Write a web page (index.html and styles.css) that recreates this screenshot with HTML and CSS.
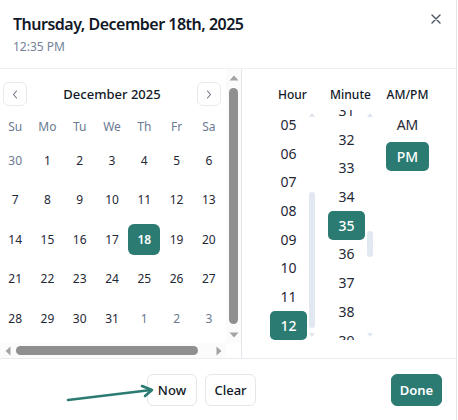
FILE: index.html
```html
<!DOCTYPE html>
<html lang="en">
<head>
<meta charset="utf-8">
<title>Date time picker</title>
<link rel="stylesheet" href="styles.css">
</head>
<body>
<div class="dialog">
  <header class="head">
    <div class="head-text">
      <div class="title">Thursday, December 18th, 2025</div>
      <div class="subtitle">12:35 PM</div>
    </div>
    <button class="close" aria-label="Close">
      <svg width="10" height="10" viewBox="0 0 10 10"><path d="M1 1L9 9M9 1L1 9" stroke="#4b5563" stroke-width="1.4" stroke-linecap="round"/></svg>
    </button>
  </header>

  <div class="body">
    <div class="cal-pane">
      <div class="cal-view">
        <div class="cal">
          <div class="cal-nav">
            <button class="nav-btn" aria-label="Previous month">
              <svg width="6" height="9" viewBox="0 0 6 9"><path d="M4.5 1L1.5 4.5L4.5 8" fill="none" stroke="#6b7280" stroke-width="1.1" stroke-linecap="round" stroke-linejoin="round"/></svg>
            </button>
            <div class="month">December 2025</div>
            <button class="nav-btn" aria-label="Next month">
              <svg width="6" height="9" viewBox="0 0 6 9"><path d="M1.5 1L4.5 4.5L1.5 8" fill="none" stroke="#6b7280" stroke-width="1.1" stroke-linecap="round" stroke-linejoin="round"/></svg>
            </button>
          </div>
          <div class="weekdays">
            <span>Su</span><span>Mo</span><span>Tu</span><span>We</span><span>Th</span><span>Fr</span><span>Sa</span>
          </div>
          <div class="days">
            <span class="day out">30</span><span class="day">1</span><span class="day">2</span><span class="day">3</span><span class="day">4</span><span class="day">5</span><span class="day">6</span>
            <span class="day">7</span><span class="day">8</span><span class="day">9</span><span class="day">10</span><span class="day">11</span><span class="day">12</span><span class="day">13</span>
            <span class="day">14</span><span class="day">15</span><span class="day">16</span><span class="day">17</span><span class="day sel">18</span><span class="day">19</span><span class="day">20</span>
            <span class="day">21</span><span class="day">22</span><span class="day">23</span><span class="day">24</span><span class="day">25</span><span class="day">26</span><span class="day">27</span>
            <span class="day">28</span><span class="day">29</span><span class="day">30</span><span class="day">31</span><span class="day out">1</span><span class="day out">2</span><span class="day out">3</span>
          </div>
        </div>
      </div>
      <div class="vscroll">
        <div class="sb-btn-v"><svg width="10" height="6" viewBox="0 0 10 6"><path d="M5 0.5L9.5 5.5H0.5Z" fill="#a3a3a3"/></svg></div>
        <div class="vtrack"><div class="vthumb"></div></div>
        <div class="sb-btn-v"><svg width="10" height="6" viewBox="0 0 10 6"><path d="M0.5 0.5H9.5L5 5.5Z" fill="#a3a3a3"/></svg></div>
      </div>
      <div class="hscroll">
        <div class="sb-btn-h"><svg width="6" height="10" viewBox="0 0 6 10"><path d="M0.5 5L5.5 0.5V9.5Z" fill="#a3a3a3"/></svg></div>
        <div class="htrack"><div class="hthumb"></div></div>
        <div class="sb-btn-h"><svg width="6" height="10" viewBox="0 0 6 10"><path d="M5.5 5L0.5 0.5V9.5Z" fill="#a3a3a3"/></svg></div>
      </div>
      <div class="corner"></div>
    </div>

    <div class="time-pane">
      <div class="tcol">
        <div class="thead">Hour</div>
        <div class="tbody">
          <div class="tlist">
            <div class="titem">05</div><div class="titem">06</div><div class="titem">07</div><div class="titem">08</div>
            <div class="titem">09</div><div class="titem">10</div><div class="titem">11</div><div class="titem sel">12</div>
          </div>
          <div class="tscroll">
            <div class="ts-btn"><svg width="6" height="4" viewBox="0 0 6 4"><path d="M3 0L6 4H0Z" fill="#dfe5ee"/></svg></div>
            <div class="ts-track"><div class="ts-thumb hour-thumb"></div></div>
            <div class="ts-btn"><svg width="6" height="4" viewBox="0 0 6 4"><path d="M0 0H6L3 4Z" fill="#dfe5ee"/></svg></div>
          </div>
        </div>
      </div>
      <div class="tcol">
        <div class="thead">Minute</div>
        <div class="tbody">
          <div class="tlist">
            <div class="tinner minute-inner">
              <div class="titem">31</div><div class="titem">32</div><div class="titem">33</div><div class="titem">34</div>
              <div class="titem sel">35</div><div class="titem">36</div><div class="titem">37</div><div class="titem">38</div><div class="titem">39</div>
            </div>
          </div>
          <div class="tscroll">
            <div class="ts-btn"><svg width="6" height="4" viewBox="0 0 6 4"><path d="M3 0L6 4H0Z" fill="#dfe5ee"/></svg></div>
            <div class="ts-track"><div class="ts-thumb minute-thumb"></div></div>
            <div class="ts-btn"><svg width="6" height="4" viewBox="0 0 6 4"><path d="M0 0H6L3 4Z" fill="#dfe5ee"/></svg></div>
          </div>
        </div>
      </div>
      <div class="tcol ampm-col">
        <div class="thead">AM/PM</div>
        <div class="ampm-list">
          <div class="ap-item">AM</div>
          <div class="ap-item sel">PM</div>
        </div>
      </div>
    </div>
  </div>

  <footer class="foot">
    <svg class="pointer" width="160" height="45" viewBox="0 0 160 45">
      <path d="M68 41L151 31" stroke="#2b7b73" stroke-width="2.6" stroke-linecap="round" fill="none"/>
      <path d="M142 27L152 31L145 37" stroke="#2b7b73" stroke-width="2.6" stroke-linecap="round" stroke-linejoin="round" fill="none"/>
    </svg>
    <button class="btn btn-now">Now</button>
    <button class="btn btn-clear">Clear</button>
    <button class="btn primary">Done</button>
  </footer>
</div>
</body>
</html>
```

FILE: styles.css
```css
* { box-sizing: border-box; }

body {
  margin: 0;
  background: #ffffff;
  font-family: "Noto Sans", "Open Sans", sans-serif;
  color: #111827;
}

button { font-family: inherit; cursor: pointer; }

.dialog {
  width: 457px;
  height: 420px;
  border-right: 1px solid #e5e7eb;
  display: flex;
  flex-direction: column;
  overflow: hidden;
}

/* header */
.head {
  flex: none;
  height: 69px;
  border-bottom: 1px solid #eceff3;
  display: flex;
  justify-content: space-between;
  align-items: flex-start;
  padding: 13px 0 0 13px;
}

.title {
  font-size: 16px;
  font-weight: 600;
  line-height: 23px;
  letter-spacing: -0.5px;
  color: #111827;
}

.subtitle {
  margin-top: 3px;
  font-size: 12px;
  line-height: 16px;
  color: #74829a;
}

.close {
  width: 24px;
  height: 24px;
  margin: -6px 8px 0 0;
  padding: 0;
  border: 0;
  background: none;
  display: flex;
  align-items: center;
  justify-content: center;
}

/* body */
.body {
  flex: none;
  height: 289px;
  display: flex;
}

.cal-pane {
  width: 242px;
  border-right: 1px solid #e5e7eb;
  display: grid;
  grid-template-columns: 226px 15px;
  grid-template-rows: 274px 15px;
}

.cal-view { overflow: hidden; }

.cal {
  width: 226px;
  margin-left: -1px;
  padding-top: 13px;
}

.cal-nav {
  height: 24px;
  padding: 0 4px;
  display: flex;
  align-items: center;
  justify-content: space-between;
}

.nav-btn {
  width: 24px;
  height: 24px;
  padding: 0;
  border: 1px solid #e8eaee;
  border-radius: 6px;
  background: #ffffff;
  display: flex;
  align-items: center;
  justify-content: center;
}

.month {
  font-size: 13px;
  font-weight: 500;
  color: #111827;
}

.weekdays {
  margin-top: 10px;
  height: 20px;
  display: grid;
  grid-template-columns: repeat(7, 1fr);
  align-items: center;
  text-align: center;
  font-size: 12px;
  color: #6b7a90;
}

.days {
  margin-top: 8px;
  display: grid;
  grid-template-columns: repeat(7, 1fr);
  grid-auto-rows: 32px;
  row-gap: 7.5px;
  font-size: 12px;
}

.day {
  display: flex;
  align-items: center;
  justify-content: center;
  color: #1f2937;
}

.day.out { color: #6b7a90; }

.day.sel {
  background: #2b7b73;
  color: #ffffff;
  font-weight: 600;
  border-radius: 6px;
  height: 31px;
  align-self: start;
  margin-top: 1px;
}

/* native-like scrollbars */
.vscroll {
  background: #fbfbfb;
  display: flex;
  flex-direction: column;
  align-items: center;
}

.sb-btn-v {
  height: 17px;
  flex: none;
  display: flex;
  align-items: center;
  justify-content: center;
}

.vtrack {
  flex: 1;
  display: flex;
  padding: 2px 0;
}

.vthumb {
  width: 9px;
  background: #8f8f8f;
  border-radius: 5px;
}

.hscroll {
  background: #fbfbfb;
  display: flex;
  align-items: center;
}

.sb-btn-h {
  width: 15px;
  flex: none;
  display: flex;
  align-items: center;
  justify-content: center;
}

.htrack {
  flex: 1;
  display: flex;
  align-items: center;
}

.hthumb {
  width: 182px;
  height: 9px;
  margin-left: 1px;
  margin-top: -1px;
  background: #8f8f8f;
  border-radius: 5px;
}

.corner { background: #ffffff; }

/* time pane */
.time-pane {
  flex: 1;
  display: flex;
  gap: 13px;
  padding: 17px 0 0 28px;
}

.tcol {
  display: flex;
  flex-direction: column;
}

.thead {
  height: 18px;
  margin-bottom: 6px;
  line-height: 18px;
  font-size: 12px;
  font-weight: 500;
  text-align: center;
  white-space: nowrap;
  color: #111827;
}

.tbody {
  height: 230px;
  display: flex;
  gap: 2px;
}

.tlist {
  width: 37px;
  overflow: hidden;
}

.minute-inner { margin-top: -13.8px; }

.titem {
  height: 28.7px;
  display: flex;
  align-items: center;
  justify-content: center;
  font-size: 14px;
  color: #1f2937;
  border-radius: 5px;
}

.titem.sel {
  background: #2b7b73;
  color: #ffffff;
  font-weight: 500;
}

.tscroll {
  width: 6px;
  display: flex;
  flex-direction: column;
}

.ts-btn {
  height: 10px;
  flex: none;
  display: flex;
  align-items: center;
  justify-content: center;
}

.ts-track { flex: 1; }

.ts-thumb {
  width: 6px;
  background: #e2e8f0;
  border-radius: 3px;
}

.hour-thumb { margin-top: 72px; height: 136px; }
.minute-thumb { margin-top: 111px; height: 26px; }

.ampm-col { width: 43px; }

.ampm-list {
  display: flex;
  flex-direction: column;
  gap: 3px;
}

.ap-item {
  height: 29px;
  display: flex;
  align-items: center;
  justify-content: center;
  font-size: 14px;
  color: #1f2937;
  border-radius: 5px;
}

.ap-item.sel {
  background: #2b7b73;
  color: #ffffff;
  font-weight: 500;
}

/* footer */
.foot {
  flex: 1;
  position: relative;
  border-top: 1px solid #e8ecf1;
  display: flex;
  align-items: flex-start;
  gap: 8px;
  padding: 15px 14px 0 147px;
}

.pointer {
  position: absolute;
  left: 0;
  top: 0;
}

.btn {
  height: 32px;
  padding: 0;
  border: 1px solid #e5e7eb;
  border-radius: 6px;
  background: #ffffff;
  font-size: 13px;
  font-weight: 500;
  color: #111827;
}

.btn-now { width: 50px; }
.btn-clear { width: 51px; }

.primary {
  width: 51px;
  margin-left: auto;
  background: #2b7b73;
  border-color: #2b7b73;
  color: #ffffff;
  font-weight: 600;
}
```
